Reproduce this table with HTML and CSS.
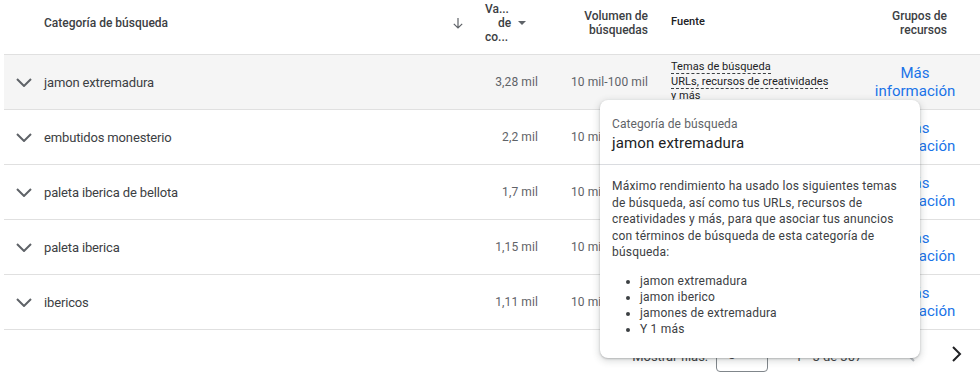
FILE: index.html
```html
<!DOCTYPE html>
<html lang="es">
<head>
<meta charset="utf-8">
<link rel="stylesheet" href="styles.css">
</head>
<body>
<div class="page">
  <div class="table">
    <div class="row head">
      <div class="cell"></div>
      <div class="cell cat-head">
        <span>Categoría de búsqueda</span>
        <svg class="sort-arrow" width="12" height="12" viewBox="0 0 12 12"><path d="M6 1v10M1.8 6.8L6 11l4.2-4.2" fill="none" stroke="#5f6368" stroke-width="1.2"/></svg>
      </div>
      <div class="cell val-head">
        <div class="val-lines"><span>Va...</span><span class="indent">de</span><span>co...</span></div>
        <span class="tri"></span>
      </div>
      <div class="cell num">Volumen de<br>búsquedas</div>
      <div class="cell src">Fuente</div>
      <div class="cell grp-head">Grupos de<br>recursos</div>
    </div>

    <div class="row hover">
      <div class="cell exp"><svg width="16" height="9" viewBox="0 0 16 9"><path d="M1 1l7 7 7-7" fill="none" stroke="#5f6368" stroke-width="2"/></svg></div>
      <div class="cell name">jamon extremadura</div>
      <div class="cell num val">3,28 mil</div>
      <div class="cell num val">10 mil-100 mil</div>
      <div class="cell src"><span class="dash">Temas de búsqueda</span><br><span class="dash">URLs, recursos de creatividades</span><br>y más</div>
      <div class="cell grp"><a class="more">Más<br>información</a></div>
    </div>

    <div class="row">
      <div class="cell exp"><svg width="16" height="9" viewBox="0 0 16 9"><path d="M1 1l7 7 7-7" fill="none" stroke="#5f6368" stroke-width="2"/></svg></div>
      <div class="cell name">embutidos monesterio</div>
      <div class="cell num val">2,2 mil</div>
      <div class="cell num val">10 mil-100 mil</div>
      <div class="cell src"><span class="dash">Temas de búsqueda</span><br><span class="dash">URLs, recursos de creatividades</span><br>y más</div>
      <div class="cell grp"><a class="more">Más<br>información</a></div>
    </div>

    <div class="row">
      <div class="cell exp"><svg width="16" height="9" viewBox="0 0 16 9"><path d="M1 1l7 7 7-7" fill="none" stroke="#5f6368" stroke-width="2"/></svg></div>
      <div class="cell name">paleta iberica de bellota</div>
      <div class="cell num val">1,7 mil</div>
      <div class="cell num val">10 mil-100 mil</div>
      <div class="cell src"><span class="dash">Temas de búsqueda</span><br><span class="dash">URLs, recursos de creatividades</span><br>y más</div>
      <div class="cell grp"><a class="more">Más<br>información</a></div>
    </div>

    <div class="row">
      <div class="cell exp"><svg width="16" height="9" viewBox="0 0 16 9"><path d="M1 1l7 7 7-7" fill="none" stroke="#5f6368" stroke-width="2"/></svg></div>
      <div class="cell name">paleta iberica</div>
      <div class="cell num val">1,15 mil</div>
      <div class="cell num val">10 mil-100 mil</div>
      <div class="cell src"><span class="dash">Temas de búsqueda</span><br><span class="dash">URLs, recursos de creatividades</span><br>y más</div>
      <div class="cell grp"><a class="more">Más<br>información</a></div>
    </div>

    <div class="row">
      <div class="cell exp"><svg width="16" height="9" viewBox="0 0 16 9"><path d="M1 1l7 7 7-7" fill="none" stroke="#5f6368" stroke-width="2"/></svg></div>
      <div class="cell name">ibericos</div>
      <div class="cell num val">1,11 mil</div>
      <div class="cell num val">10 mil-100 mil</div>
      <div class="cell src"><span class="dash">Temas de búsqueda</span><br><span class="dash">URLs, recursos de creatividades</span><br>y más</div>
      <div class="cell grp"><a class="more">Más<br>información</a></div>
    </div>
  </div>

  <div class="pager">
    <span class="label">Mostrar filas:</span>
    <div class="select"><span>5</span><span class="tri"></span></div>
    <span class="range">1 - 5 de 307</span>
    <svg class="pg prev" width="10" height="16" viewBox="0 0 10 16"><path d="M9 1L2 8l7 7" fill="none" stroke="#bdc1c6" stroke-width="2"/></svg>
    <svg class="pg next" width="10" height="16" viewBox="0 0 10 16"><path d="M1 1l7 7-7 7" fill="none" stroke="#202124" stroke-width="2"/></svg>
  </div>

  <div class="card">
    <div class="card-head">
      <div class="card-label">Categoría de búsqueda</div>
      <div class="card-title">jamon extremadura</div>
    </div>
    <div class="card-body">
      <p>Máximo rendimiento ha usado los siguientes temas de búsqueda, así como tus URLs, recursos de creatividades y más, para que asociar tus anuncios con términos de búsqueda de esta categoría de búsqueda:</p>
      <ul>
        <li>jamon extremadura</li>
        <li>jamon iberico</li>
        <li>jamones de extremadura</li>
        <li>Y 1 más</li>
      </ul>
    </div>
  </div>
</div>
</body>
</html>
```

FILE: styles.css
```css
* { box-sizing: border-box; }
html, body { margin: 0; padding: 0; background: #fff; }
body {
  font-family: Roboto, "Noto Sans", Arial, sans-serif;
  color: #3c4043;
  width: 980px;
  height: 377px;
  overflow: hidden;
}
.page { position: relative; height: 377px; }
.table { padding-left: 4px; }
.row {
  display: grid;
  grid-template-columns: 40px 431px 63px 110px 207px 125px;
  height: 55px;
  border-bottom: 1px solid #e0e0e0;
}
.row.hover { background: #f5f5f5; }
.cell {
  display: flex;
  align-items: center;
  font-size: 13px;
}
.head .cell {
  font-size: 12px;
  font-weight: 500;
  line-height: 14px;
  color: #3c4043;
  padding-bottom: 9px;
}
.cat-head { justify-content: space-between; padding-right: 11px; }
.sort-arrow { margin-top: 1px; }
.head .val-head { padding-left: 10px; padding-bottom: 8px; }
.val-lines { display: flex; flex-direction: column; line-height: 14px; }
.val-lines .indent { padding-left: 13px; }
.val-head .tri {
  width: 0; height: 0;
  margin-left: 7px;
  border-left: 4px solid transparent;
  border-right: 4px solid transparent;
  border-top: 4px solid #5f6368;
}
.num { justify-content: flex-end; text-align: right; }
.val { color: #5f6368; font-size: 12px; letter-spacing: 0.1px; }
.src { padding-left: 23px; }
.row .src {
  font-size: 11px;
  line-height: 14.5px;
  color: #202124;
  display: block;
  align-self: center;
  letter-spacing: 0.05px;
}
.head .src { display: flex; }
.grp-head { justify-content: flex-end; text-align: right; padding-right: 33px; }
.exp { padding-left: 12px; padding-top: 1px; }
.name { color: #3c4043; letter-spacing: -0.15px; }
.dash { border-bottom: 1px dashed #3c4043; }
.grp { justify-content: center; padding-right: 5px; }
.more {
  color: #1a73e8;
  font-size: 15px;
  line-height: 18px;
  text-align: center;
  text-decoration: none;
}

.pager {
  display: flex;
  align-items: center;
  justify-content: flex-end;
  height: 47px;
  padding-right: 18px;
  font-size: 13px;
  color: #3c4043;
}
.pager .label { margin-right: 8px; margin-top: 6px; }
.select {
  width: 52px;
  height: 36px;
  border: 1px solid #80868b;
  border-radius: 4px;
  display: flex;
  align-items: center;
  padding-left: 11px;
  margin-top: 1px;
  margin-right: 27px;
}
.select .tri {
  width: 0; height: 0;
  margin-left: 10px;
  border-left: 5px solid transparent;
  border-right: 5px solid transparent;
  border-top: 5px solid #5f6368;
}
.range { margin-right: 37px; margin-top: 6px; min-width: 73px; }
.pg.prev { margin-right: 37px; }

.card {
  position: absolute;
  left: 600px;
  top: 100px;
  width: 320px;
  background: #fff;
  border-radius: 8px;
  box-shadow: 0 1px 2px rgba(60,64,67,.3), 0 2px 6px 2px rgba(60,64,67,.15);
}
.card-head {
  padding: 16px 12px 10px;
  border-bottom: 1px solid #dadce0;
}
.card-label { font-size: 12px; line-height: 16px; color: #5f6368; letter-spacing: 0.1px; }
.card-title { font-size: 15px; line-height: 22px; color: #202124; letter-spacing: 0.15px; }
.card-body {
  padding: 13px 12px 21px;
  font-size: 12px;
  line-height: 16.5px;
  color: #3c4043;
  letter-spacing: 0.2px;
}
.card-body p { margin: 0 0 12px; }
.card-body ul { margin: 0; padding-left: 28px; line-height: 16px; }
```
